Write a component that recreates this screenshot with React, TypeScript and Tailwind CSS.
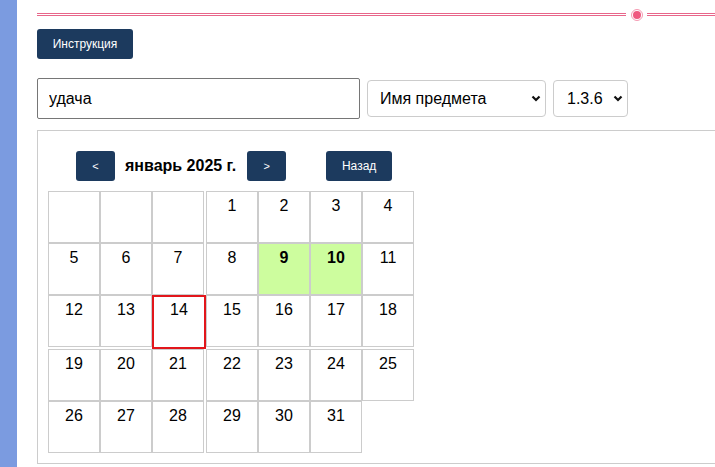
const days: (number | null)[] = [
  null, null, null, 1, 2, 3, 4,
  5, 6, 7, 8, 9, 10, 11,
  12, 13, 14, 15, 16, 17, 18,
  19, 20, 21, 22, 23, 24, 25,
  26, 27, 28, 29, 30, 31,
];

const marked = [9, 10];
const today = 14;

function Chevron() {
  return (
    <svg width="10" height="7" viewBox="0 0 10 7" className="shrink-0">
      <path d="M1.5 1.5L5 5L8.5 1.5" fill="none" stroke="#111" strokeWidth="2.2" />
    </svg>
  );
}

function FakeSelect({ label, className }: { label: string; className: string }) {
  return (
    <div
      className={`flex h-[37px] items-center justify-between rounded-[4px] border border-[#cccccc] bg-white pr-[4px] text-[16px] ${className}`}
    >
      <span>{label}</span>
      <Chevron />
    </div>
  );
}

function NavButton({ children, className = '' }: { children: React.ReactNode; className?: string }) {
  return (
    <button
      className={`flex h-[30px] items-center justify-center rounded-[3px] bg-[#1c3a5e] text-white ${className}`}
    >
      {children}
    </button>
  );
}

export default function App() {
  return (
    <div className="flex h-[467px] w-[715px] overflow-hidden bg-white font-['Liberation_Sans',Arial,sans-serif] text-black">
      <aside className="w-[17px] shrink-0 bg-[#7b9be0]" />
      <main className="min-w-0 flex-1 overflow-hidden pl-[20px] pt-[8px]">
        {/* decorative divider */}
        <div className="flex h-[13px] items-center">
          <div className="h-[3px] flex-1 border-y border-[#e8668a]" />
          <div className="ml-[5px] flex h-[12px] w-[12px] items-center justify-center rounded-full border border-[#f59ab2]">
            <div className="h-[8px] w-[8px] rounded-full bg-[#ef5a80]" />
          </div>
          <div className="ml-[4px] h-[3px] w-[68px] border-y border-[#e8668a]" />
        </div>

        <button className="mt-[8px] flex h-[30px] w-[96px] items-center justify-center rounded-[3px] bg-[#1c3a5e] text-[12px] text-white">
          Инструкция
        </button>

        <div className="mt-[19px] flex items-center gap-[7px]">
          <input
            readOnly
            value="удача"
            className="h-[41px] w-[323px] rounded-[2px] border border-[#767676] px-[11px] text-[16px] outline-none"
          />
          <FakeSelect label="Имя предмета" className="w-[179px] pl-[12px]" />
          <FakeSelect label="1.3.6" className="w-[75px] pl-[13px]" />
        </div>

        <div className="mt-[11px] w-[720px] border border-[#cccccc] px-[10px] pb-[10px] pt-[20px]">
          <div className="ml-[28px] flex items-center">
            <NavButton className="w-[39px] text-[11px]">&lt;</NavButton>
            <span className="ml-[10px] text-[16px] font-bold">январь 2025 г.</span>
            <NavButton className="ml-[11px] w-[39px] text-[11px]">&gt;</NavButton>
            <NavButton className="ml-[40px] w-[66px] text-[12px]">Назад</NavButton>
          </div>

          <div className="mt-[10px] grid grid-cols-[52px_52px_54px_52px_52px_52px_52px] grid-rows-[52px_52px_54px_52px_52px] items-start justify-items-start">
            {days.map((d, i) => {
              if (d === today) {
                return (
                  <div
                    key={i}
                    className="h-[54px] w-[54px] border-2 border-[#e2161b] pt-[4px] text-center text-[16px] leading-[18px]"
                  >
                    {d}
                  </div>
                );
              }
              const hit = d !== null && marked.includes(d);
              return (
                <div
                  key={i}
                  className={`h-[52px] w-[52px] border border-[#cccccc] pt-[5px] text-center text-[16px] leading-[18px] ${
                    hit ? 'bg-[#cdfd9e] font-bold' : ''
                  }`}
                >
                  {d ?? ''}
                </div>
              );
            })}
          </div>
        </div>
      </main>
    </div>
  );
}
